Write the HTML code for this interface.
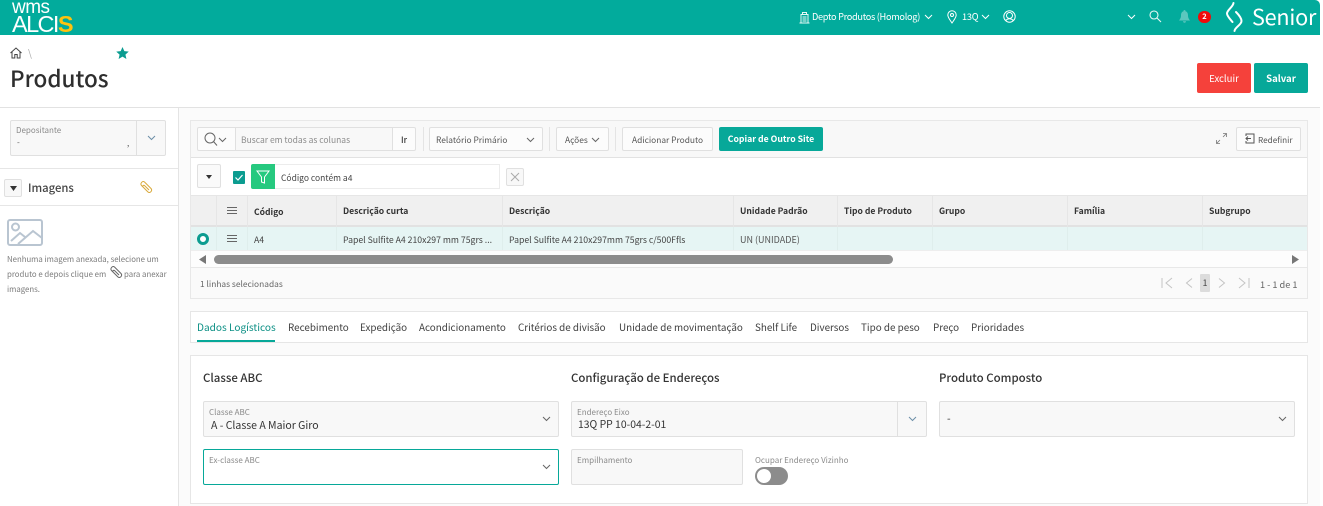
<!DOCTYPE html>
<html lang="pt"><head><meta charset="utf-8"><title>Produtos</title>
<style>
html,body{margin:0;padding:0;width:1323px;height:506px;overflow:hidden;background:#fff}
body{position:relative;font-family:"Noto Sans CJK JP","Liberation Sans",sans-serif;color:#404040;font-size:9px}
div,span.t,svg.a{position:absolute;box-sizing:border-box}
.t{white-space:nowrap;line-height:14px;height:14px}
.box{border:1px solid #e0e0e0;border-radius:2px}
.tab{top:320px;font-size:9.85px;color:#404040}
.h{top:204px;font-size:8.6px;font-weight:700;color:#333}
.c{top:233px;font-size:8.7px;color:#444}
.sep{top:196px;width:1px;height:31px;background:#e6e6e6}
.sep2{top:227px;width:1px;height:23px;background:#dfeeec}
.lab{font-size:8px;color:#8a8a8a}
.sec{top:371px;font-size:11.45px;color:#333;font-weight:500}
.side{font-size:7.8px;color:#7a7a7a}
.tb{top:133px;font-size:8.4px;color:#555}
svg{overflow:visible}
</style></head><body>
<!-- top bar -->
<div style="left:0;top:0;width:1320px;height:35px;background:#02ab9c;border-top-right-radius:5px"></div>
<span class="t" style="left:12px;top:-2px;height:19px;font-size:19px;line-height:19px;color:#fff;letter-spacing:-.5px;font-family:'Liberation Sans',sans-serif">wms</span>
<span class="t" style="left:12px;top:12px;font-size:23.5px;line-height:24px;height:24px;color:#fff;letter-spacing:-1.6px;font-family:'Liberation Sans',sans-serif">ALCI<span style="color:#ffc20e;font-weight:700">S</span></span>

<svg class="a" style="left:799px;top:11px" width="11" height="13" viewBox="0 0 11 13" fill="none" stroke="#e8f8f6" stroke-width="1"><path d="M2 12V3.500H9V12M.5 12H10.500M3.500 3.500V1.500H7.500V3.500M3.500 6H7.500M3.500 8H7.500M3.500 10H7.500"/></svg>
<span class="t" style="left:812px;top:9px;font-size:9.2px;letter-spacing:-.3px;color:#fff">Depto Produtos (Homolog)</span>
<svg class="a" style="left:924px;top:14px" width="9" height="6" fill="none" stroke="#fff"><path d="M1 1L4.500 4.500L8 1"/></svg>
<svg class="a" style="left:947px;top:10px" width="10" height="14" viewBox="0 0 10 14" fill="none" stroke="#fff"><path d="M5 13C3 10 .8 7.500 .8 5A4.200 4.200 0 0 1 9.200 5C9.200 7.500 7 10 5 13Z"/><circle cx="5" cy="5" r="1.500"/></svg>
<span class="t" style="left:962px;top:9px;font-size:9.2px;letter-spacing:-.2px;color:#fff">13Q</span>
<svg class="a" style="left:981px;top:14px" width="9" height="6" fill="none" stroke="#fff"><path d="M1 1L4.500 4.500L8 1"/></svg>
<svg class="a" style="left:1003px;top:10px" width="13" height="13" viewBox="0 0 13 13" fill="none" stroke="#fff"><circle cx="6.500" cy="6.500" r="5.700"/><circle cx="6.500" cy="5.500" r="3"/><path d="M2.500 10.500Q6.500 7 10.500 10.500"/></svg>
<svg class="a" style="left:1127px;top:14px" width="9" height="6" fill="none" stroke="#fff"><path d="M1 1L4.500 4.500L8 1"/></svg>
<svg class="a" style="left:1149px;top:10px" width="13" height="13" viewBox="0 0 13 13" fill="none" stroke="#e8f8f6" stroke-width="1.100"><circle cx="5" cy="5" r="4"/><path d="M8 8L12 12"/></svg>
<svg class="a" style="left:1179px;top:10px" width="11" height="13" viewBox="0 0 11 13" fill="#5cc7be"><path d="M5.500 0C6.300 0 6.500.6 6.500 1.200C8.500 1.800 9 3.500 9 5.500C9 8 10 9 11 10.500H0C1 9 2 8 2 5.500C2 3.500 2.500 1.800 4.500 1.200C4.500.6 4.700 0 5.500 0ZM4 11.300H7C7 13.200 4 13.200 4 11.300Z"/></svg>
<div style="left:1198px;top:11px;width:13px;height:12px;border-radius:6px;background:#f10a0a;color:#fff;font-size:7.500px;line-height:12px;text-align:center;font-weight:700">2</div>
<svg class="a" style="left:1226px;top:2px" width="18" height="30" viewBox="0 0 18 30" fill="none" stroke="#fff" stroke-width="2" stroke-linecap="round"><path d="M7.500 1C7 5 1 8 1 11.500C1 14 4 17 6.500 20"/><path d="M10 10C13 13 15.500 16 15.500 19C15.500 23 9 25 8.500 29"/></svg>
<span class="t" style="left:1252px;top:1px;height:32px;font-size:21.6px;line-height:32px;color:#fff;letter-spacing:-.2px;font-weight:400">Senior</span>

<!-- page header -->
<svg class="a" style="left:10px;top:47px" width="12" height="12" viewBox="0 0 12 12" fill="none" stroke="#444"><path d="M.5 6L6 1L11.500 6M2 5V11H4.800V7.500H7.200V11H10V5"/></svg>
<span class="t" style="left:28px;top:46px;font-size:10px;color:#aaa">\</span>
<svg class="a" style="left:116px;top:47px" width="13" height="12" viewBox="0 0 24 23" fill="#0b9c90"><path d="M12 0L15.500 8L24 8.800L17.600 14.500L19.500 23L12 18.500L4.500 23L6.400 14.500L0 8.800L8.500 8Z"/></svg>
<span class="t" style="left:10px;top:62px;height:32px;font-size:22.5px;line-height:32px;color:#2e2e2e;font-weight:500">Produtos</span>
<div style="left:1197px;top:63px;width:54px;height:30px;background:#f5413b;border-radius:2px;color:#fff;font-size:9.6px;line-height:30px;text-align:center">Excluir</div>
<div style="left:1254px;top:63px;width:54px;height:30px;background:#07a899;border-radius:2px;color:#fff;font-size:9.6px;line-height:30px;text-align:center;font-weight:700">Salvar</div>
<div style="left:0;top:107px;width:1320px;height:1px;background:#e2e2e2"></div>

<!-- main bg -->
<div style="left:179px;top:108px;width:1141px;height:398px;background:#fbfbfb"></div>
<div style="left:178px;top:108px;width:1px;height:398px;background:#e4e4e4"></div>

<!-- sidebar -->
<div class="box" style="left:10px;top:120px;width:156px;height:36px;background:#f8f8f8"></div>
<div style="left:136px;top:121px;width:1px;height:34px;background:#e0e0e0"></div>
<span class="t lab" style="left:16px;top:124px">Depositante</span>
<span class="t" style="left:17px;top:136px;font-size:8px;color:#555">-</span>
<span class="t" style="left:127px;top:137px;font-size:8px;color:#555">,</span>
<svg class="a" style="left:147px;top:135px" width="9" height="6" fill="none" stroke="#6d8fa8"><path d="M1 1L4.500 4.500L8 1"/></svg>
<div style="left:0;top:168px;width:178px;height:1px;background:#e6e6e6"></div>
<div class="box" style="left:4px;top:179px;width:18px;height:18px;background:#f8f8f8"></div>
<svg class="a" style="left:10px;top:186px" width="7" height="5" fill="#333"><path d="M0 0H7L3.500 5Z"/></svg>
<span class="t" style="left:28px;top:180px;height:16px;line-height:16px;font-size:11.3px;color:#444;font-weight:500">Imagens</span>
<svg class="a" style="left:140px;top:181px" width="13" height="13" viewBox="0 0 13 13" fill="none" stroke="#d9a93a" stroke-width="1"><path d="M3.500 6.500L1.500 4.500C-.2 2.500 2.500-.5 4.500 1L11 7.500C12.800 9.500 10 12.800 8 11L3 6C2.200 5 3.500 3.800 4.500 4.500L9 9"/></svg>
<div style="left:0;top:205px;width:178px;height:1px;background:#e6e6e6"></div>
<svg class="a" style="left:7px;top:219px" width="36" height="27" viewBox="0 0 36 27" fill="none" stroke="#b9c5d1" stroke-width="2"><rect x="1" y="1" width="34" height="25" rx="2"/><circle cx="8.500" cy="8" r="3.500"/><path d="M4 22L13 14L18 18M11 25L26 12L35 19"/></svg>
<span class="t side" style="left:7px;top:253px">Nenhuma imagem anexada, selecione um</span>
<span class="t side" style="left:7px;top:268px">produto e depois clique em</span>
<svg class="a" style="left:110px;top:266px" width="13" height="13" viewBox="0 0 13 13" fill="none" stroke="#666" stroke-width="1"><path d="M3.500 6.500L1.500 4.500C-.2 2.500 2.500-.5 4.500 1L11 7.500C12.800 9.500 10 12.800 8 11L3 6C2.200 5 3.500 3.800 4.500 4.500L9 9"/></svg>
<span class="t side" style="left:124px;top:268px">para anexar</span>
<span class="t side" style="left:7px;top:283px">imagens.</span>

<!-- grid panel -->
<div style="left:190px;top:120px;width:1118px;height:179px;background:#fafafa;border:1px solid #e8e8e8"></div>
<div style="left:191px;top:121px;width:1116px;height:37px;background:#f8f8f8;border-bottom:1px solid #e2e2e2"></div>
<div style="left:191px;top:158px;width:1116px;height:37px;background:#fff"></div>

<div class="box" style="left:197px;top:127px;width:219px;height:24px;background:#fcfcfc"></div>
<div style="left:235px;top:128px;width:1px;height:22px;background:#e0e0e0"></div>
<div style="left:392px;top:128px;width:1px;height:22px;background:#e0e0e0"></div>
<div style="left:236px;top:128px;width:156px;height:22px;background:#f8f8f8"></div>
<svg class="a" style="left:204px;top:132px" width="13" height="14" viewBox="0 0 13 14" fill="none" stroke="#666" stroke-width="1"><circle cx="6" cy="6" r="5"/><path d="M9.500 9.500L13 13.500"/></svg>
<svg class="a" style="left:218px;top:137px" width="9" height="6" fill="none" stroke="#666"><path d="M1 1L4.500 4.500L8 1"/></svg>
<span class="t tb" style="left:241px;font-size:8.5px;color:#8c8c8c">Buscar em todas as colunas</span>
<span class="t tb" style="left:401px;color:#333;font-weight:500">Ir</span>
<div style="left:423px;top:127px;width:1px;height:24px;background:#e4e4e4"></div>
<div class="box" style="left:429px;top:127px;width:114px;height:24px;background:#fcfcfc"></div>
<span class="t tb" style="left:436px">Relatório Primário</span>
<svg class="a" style="left:526px;top:137px" width="9" height="6" fill="none" stroke="#666"><path d="M1 1L4.500 4.500L8 1"/></svg>
<div style="left:549px;top:127px;width:1px;height:24px;background:#e4e4e4"></div>
<div class="box" style="left:556px;top:127px;width:53px;height:24px;background:#fcfcfc"></div>
<span class="t tb" style="left:565px">Ações</span>
<svg class="a" style="left:591px;top:137px" width="9" height="6" fill="none" stroke="#666"><path d="M1 1L4.500 4.500L8 1"/></svg>
<div style="left:615px;top:127px;width:1px;height:24px;background:#e4e4e4"></div>
<div class="box" style="left:622px;top:127px;width:91px;height:24px;background:#fcfcfc"></div>
<span class="t tb" style="left:632px">Adicionar Produto</span>
<div style="left:719px;top:127px;width:104px;height:24px;background:#07a899;border-radius:2px;color:#fff;font-size:8.7px;line-height:24px;text-align:center;font-weight:700">Copiar de Outro Site</div>
<svg class="a" style="left:1216px;top:133px" width="11" height="11" viewBox="0 0 11 11" fill="none" stroke="#777" stroke-width=".8"><path d="M.5 7V10.500H4M.5 10.500L4 7M7 .5H10.500V4M10.500 .5L7 4"/></svg>
<div class="box" style="left:1236px;top:127px;width:65px;height:24px;background:#fcfcfc"></div>
<svg class="a" style="left:1244px;top:133px" width="11" height="11" viewBox="0 0 11 11" fill="none" stroke="#555"><path d="M2 3V1H10V10H2V8M7 5.500H2M4 3.500L2 5.500L4 7.500"/></svg>
<span class="t tb" style="left:1258px;font-size:8.2px">Redefinir</span>

<!-- filter row -->
<div class="box" style="left:197px;top:164px;width:24px;height:24px;background:#fafafa"></div>
<svg class="a" style="left:206px;top:175px" width="6" height="4" fill="#333"><path d="M0 0H6L3 4Z"/></svg>
<div style="left:233px;top:171px;width:12px;height:13px;background:#0b9c90;border-radius:1px"></div>
<svg class="a" style="left:235px;top:174px" width="8" height="7" fill="none" stroke="#fff" stroke-width="1.200"><path d="M.5 3.500L3 6L7.500 1"/></svg>
<div style="left:275px;top:164px;width:225px;height:25px;background:#fff;border:1px solid #ececec;border-left:0"></div>
<div style="left:251px;top:164px;width:24px;height:25px;background:#26c97f;border-radius:2px 0 0 2px"></div>
<svg class="a" style="left:256px;top:170px" width="14" height="14" viewBox="0 0 14 14" fill="none" stroke="#fff"><path d="M1 1H13L8.500 7V13L5.500 12V7Z"/></svg>
<span class="t" style="left:281px;top:171px;font-size:8.5px;color:#444">Código contém a4</span>
<div class="box" style="left:506px;top:168px;width:18px;height:18px;background:#f8f8f8"></div>
<svg class="a" style="left:511px;top:173px" width="8" height="8" fill="none" stroke="#aaa"><path d="M0 0L8 8M8 0L0 8"/></svg>

<!-- table -->
<div style="left:191px;top:195px;width:1116px;height:32px;background:#f0f0f0;border-top:1px solid #e6e6e6;border-bottom:2px solid #e2e2e2"></div>
<div class="sep" style="left:216px"></div><div class="sep" style="left:247px"></div><div class="sep" style="left:336px"></div><div class="sep" style="left:502px"></div><div class="sep" style="left:733px"></div><div class="sep" style="left:837px"></div><div class="sep" style="left:932px"></div><div class="sep" style="left:1067px"></div><div class="sep" style="left:1202px"></div>
<svg class="a" style="left:227px;top:207px" width="10" height="8" fill="none" stroke="#666"><path d="M0 .5H10M0 3.500H10M0 6.500H10"/></svg>
<span class="t h" style="left:254px;top:205px">Código</span>
<span class="t h" style="left:343px">Descrição curta</span>
<span class="t h" style="left:509px">Descrição</span>
<span class="t h" style="left:740px">Unidade Padrão</span>
<span class="t h" style="left:844px">Tipo de Produto</span>
<span class="t h" style="left:939px">Grupo</span>
<span class="t h" style="left:1074px">Família</span>
<span class="t h" style="left:1209px">Subgrupo</span>
<div style="left:191px;top:227px;width:1116px;height:23px;background:#e6f5f4"></div>
<div class="sep2" style="left:216px"></div><div class="sep2" style="left:247px"></div><div class="sep2" style="left:336px"></div><div class="sep2" style="left:502px"></div><div class="sep2" style="left:733px"></div><div class="sep2" style="left:837px"></div><div class="sep2" style="left:932px"></div><div class="sep2" style="left:1067px"></div><div class="sep2" style="left:1202px"></div>
<div style="left:197px;top:233px;width:12px;height:12px;border-radius:50%;border:3px solid #0b9c90;background:#fff"></div>
<svg class="a" style="left:227px;top:235px" width="10" height="8" fill="none" stroke="#666"><path d="M0 .5H10M0 3.500H10M0 6.500H10"/></svg>
<span class="t c" style="left:254px">A4</span>
<span class="t c" style="left:343px">Papel Sulfite A4 210x297 mm 75grs ...</span>
<span class="t c" style="left:509px">Papel Sulfite A4 210x297mm 75grs c/500Ffls</span>
<span class="t c" style="left:740px;color:#555;font-size:9px">UN (UNIDADE)</span>
<div style="left:191px;top:250px;width:1116px;height:18px;background:#fdfdfd;border-top:1px solid #eee;border-bottom:1px solid #e8e8e8"></div>
<svg class="a" style="left:199px;top:255px" width="7" height="9" fill="#777"><path d="M7 0V9L0 4.500Z"/></svg>
<div style="left:214px;top:255px;width:679px;height:9px;border-radius:5px;background:#8c8c8c"></div>
<svg class="a" style="left:1292px;top:255px" width="7" height="9" fill="#777"><path d="M0 0V9L7 4.500Z"/></svg>
<span class="t" style="left:200px;top:277px;font-size:8.4px;color:#666">1 linhas selecionadas</span>
<svg class="a" style="left:1161px;top:277px" width="90" height="12" fill="none" stroke="#c4c4c4"><path d="M1 1V11M11 1L5 6L11 11M31 1.500L25.500 6L31 10.500M58 1.500L63.500 6L58 10.500M78 1L84 6L78 11M88 1V11"/></svg>
<div style="left:1200px;top:274px;width:10px;height:18px;background:#dcdcdc;border-radius:1px;color:#444;font-size:9px;line-height:18px;text-align:center">1</div>
<span class="t" style="left:1260px;top:277px;font-size:9.2px;color:#666">1 - 1 de 1</span>

<!-- tabs -->
<div style="left:190px;top:311px;width:1118px;height:32px;background:#fff;border:1px solid #e6e6e6"></div>
<span class="t tab" style="left:197px;color:#0b8f84;font-size:10.1px">Dados Logísticos</span>
<div style="left:197px;top:340px;width:78px;height:2px;background:#07a899"></div>
<span class="t tab" style="left:288px">Recebimento</span>
<span class="t tab" style="left:360px">Expedição</span>
<span class="t tab" style="left:419px">Acondicionamento</span>
<span class="t tab" style="left:518px">Critérios de divisão</span>
<span class="t tab" style="left:619px">Unidade de movimentação</span>
<span class="t tab" style="left:755px">Shelf Life</span>
<span class="t tab" style="left:810px">Diversos</span>
<span class="t tab" style="left:861px">Tipo de peso</span>
<span class="t tab" style="left:933px">Preço</span>
<span class="t tab" style="left:971px">Prioridades</span>

<!-- form -->
<div style="left:190px;top:355px;width:1118px;height:149px;background:#fff;border:1px solid #e6e6e6"></div>
<span class="t sec" style="left:203px">Classe ABC</span>
<span class="t sec" style="left:571px">Configuração de Endereços</span>
<span class="t sec" style="left:939px">Produto Composto</span>

<div class="box" style="left:203px;top:401px;width:356px;height:36px;background:#f8f8f8"></div>
<span class="t lab" style="left:209px;top:406px">Classe ABC</span>
<span class="t" style="left:211px;top:419px;font-size:10.5px;color:#333">A - Classe A Maior Giro</span>
<svg class="a" style="left:542px;top:416px" width="9" height="6" fill="none" stroke="#666"><path d="M1 1L4.500 4.500L8 1"/></svg>

<div style="left:203px;top:449px;width:356px;height:36px;background:#fff;border:1px solid #07a899;border-radius:2px"></div>
<span class="t lab" style="left:209px;top:454px">Ex-classe ABC</span>
<svg class="a" style="left:542px;top:464px" width="9" height="6" fill="none" stroke="#666"><path d="M1 1L4.500 4.500L8 1"/></svg>

<div class="box" style="left:571px;top:401px;width:356px;height:36px;background:#f8f8f8"></div>
<div style="left:897px;top:402px;width:1px;height:34px;background:#e0e0e0"></div>
<span class="t lab" style="left:577px;top:406px">Endereço Eixo</span>
<span class="t" style="left:578px;top:417px;font-size:10.4px;color:#333">13Q PP 10-04-2-01</span>
<svg class="a" style="left:908px;top:416px" width="9" height="6" fill="none" stroke="#6d8fa8"><path d="M1 1L4.500 4.500L8 1"/></svg>

<div class="box" style="left:571px;top:449px;width:172px;height:36px;background:#f8f8f8"></div>
<span class="t lab" style="left:577px;top:454px">Empilhamento</span>
<span class="t lab" style="left:755px;top:454px">Ocupar Endereço Vizinho</span>
<div style="left:755px;top:467px;width:33px;height:18px;border-radius:9px;background:#8c8c8c"></div>
<div style="left:757px;top:469px;width:14px;height:14px;border-radius:50%;background:#fff"></div>

<div class="box" style="left:939px;top:401px;width:356px;height:36px;background:#f8f8f8"></div>
<span class="t" style="left:947px;top:412px;font-size:10.5px;color:#333">-</span>
<svg class="a" style="left:1278px;top:416px" width="9" height="6" fill="none" stroke="#666"><path d="M1 1L4.500 4.500L8 1"/></svg>
</body></html>
